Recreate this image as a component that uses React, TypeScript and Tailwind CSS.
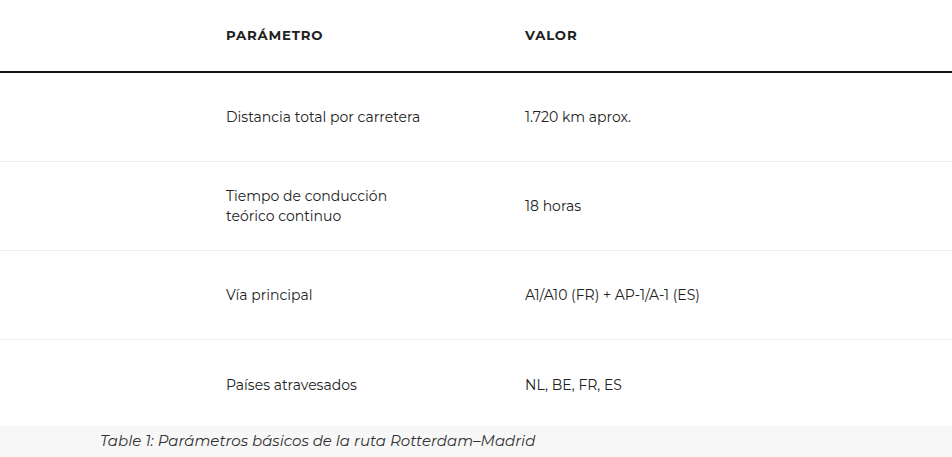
const rows: { param: React.ReactNode; value: string }[] = [
  { param: "Distancia total por carretera", value: "1.720 km aprox." },
  {
    param: (
      <>
        Tiempo de conducción
        <br />
        teórico continuo
      </>
    ),
    value: "18 horas",
  },
  { param: "Vía principal", value: "A1/A10 (FR) + AP-1/A-1 (ES)" },
  { param: "Países atravesados", value: "NL, BE, FR, ES" },
];

export default function App() {
  return (
    <div className="w-[952px] h-[457px] bg-white text-[#222] font-['Montserrat','Open_Sans',sans-serif] overflow-hidden">
      {/* Header */}
      <div className="grid grid-cols-[299px_1fr] pl-[226px] h-[73px] items-center border-b-2 border-[#111]">
        <div className="text-[13.3px] font-bold tracking-[0.06em] uppercase">Parámetro</div>
        <div className="text-[13.3px] font-bold tracking-[0.06em] uppercase">Valor</div>
      </div>

      {/* Body */}
      {rows.map((row, i) => (
        <div
          key={i}
          className={`grid grid-cols-[299px_1fr] pl-[226px] items-center text-[14px] leading-[20px] ${
            i < rows.length - 1 ? "h-[89px] border-b border-[#efefef]" : "h-[86px] pt-[3px]"
          }`}
        >
          <div>{row.param}</div>
          <div>{row.value}</div>
        </div>
      ))}

      {/* Caption */}
      <div className="bg-[#f7f7f7] h-[31px] flex items-center pl-[100px] text-[15px] italic text-[#333]">
        Table 1: Parámetros básicos de la ruta Rotterdam–Madrid
      </div>
    </div>
  );
}
